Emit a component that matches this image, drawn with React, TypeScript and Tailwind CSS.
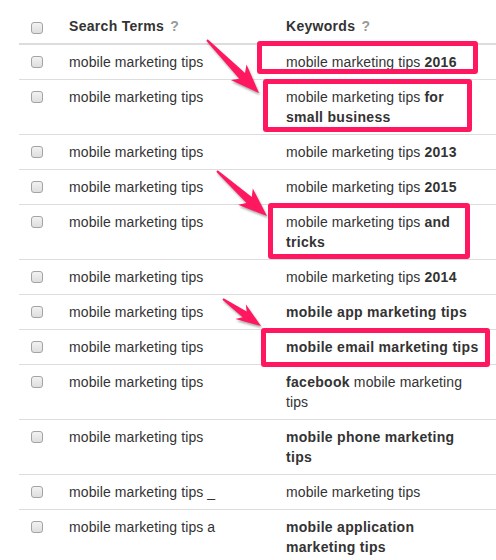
import React from "react";

type Seg = { t: string; b?: boolean };
type Row = { term: string; kw: Seg[] };

const rows: Row[] = [
  { term: "mobile marketing tips", kw: [{ t: "mobile marketing tips " }, { t: "2016", b: true }] },
  { term: "mobile marketing tips", kw: [{ t: "mobile marketing tips " }, { t: "for small business", b: true }] },
  { term: "mobile marketing tips", kw: [{ t: "mobile marketing tips " }, { t: "2013", b: true }] },
  { term: "mobile marketing tips", kw: [{ t: "mobile marketing tips " }, { t: "2015", b: true }] },
  { term: "mobile marketing tips", kw: [{ t: "mobile marketing tips " }, { t: "and tricks", b: true }] },
  { term: "mobile marketing tips", kw: [{ t: "mobile marketing tips " }, { t: "2014", b: true }] },
  { term: "mobile marketing tips", kw: [{ t: "mobile app marketing tips", b: true }] },
  { term: "mobile marketing tips", kw: [{ t: "mobile email marketing tips", b: true }] },
  { term: "mobile marketing tips", kw: [{ t: "facebook", b: true }, { t: " mobile marketing tips" }] },
  { term: "mobile marketing tips", kw: [{ t: "mobile phone marketing tips", b: true }] },
  { term: "mobile marketing tips _", kw: [{ t: "mobile marketing tips" }] },
  { term: "mobile marketing tips a", kw: [{ t: "mobile application marketing tips", b: true }] },
];

function Checkbox({ header }: { header?: boolean }) {
  return (
    <div className={`h-5 flex items-center relative ${header ? "top-[2px]" : ""}`}>
      <span className="block w-[12px] h-[12px] rounded-[3px] border border-[#a3a3a3] bg-gradient-to-b from-[#f2f2f2] to-[#dedede]" />
    </div>
  );
}

type Pt = [number, number];
function arrowPoints(T: Pt, P: Pt, h: number, hw: number, sw: number): string {
  const dx = P[0] - T[0];
  const dy = P[1] - T[1];
  const L = Math.hypot(dx, dy);
  const ux = dx / L;
  const uy = dy / L;
  const nx = -uy;
  const ny = ux;
  const at = (d: number, o: number): Pt => [T[0] + ux * d + nx * o, T[1] + uy * d + ny * o];
  const pts: Pt[] = [
    at(0, 1),
    at(L - h, sw),
    at(L - h - 5, hw),
    P,
    at(L - h - 5, -hw),
    at(L - h, -sw),
    at(0, -1),
  ];
  return pts.map((p) => `${p[0].toFixed(1)},${p[1].toFixed(1)}`).join(" ");
}

export default function App() {
  return (
    <div
      className="relative w-[496px] h-[560px] overflow-hidden bg-white text-[14px] leading-5 text-[#333] tracking-[0.1px]"
      style={{ fontFamily: '"Liberation Sans", Arial, sans-serif' }}
    >
      <div className="pl-[19px]">
        <div className="grid grid-cols-[50px_217px_1fr] border-b-2 border-[#dddddd] pt-4 pb-[7px] font-bold tracking-[0.3px]">
          <div className="pl-3">
            <Checkbox header />
          </div>
          <div>
            Search Terms <span className="text-[#9a9a9a] ml-[2px]">?</span>
          </div>
          <div>
            Keywords <span className="text-[#9a9a9a] ml-[2px]">?</span>
          </div>
        </div>
        {rows.map((r, i) => (
          <div key={i} className="grid grid-cols-[50px_217px_1fr] border-b border-[#dddddd] py-[7px]">
            <div className="pl-3">
              <Checkbox />
            </div>
            <div>{r.term}</div>
            <div className="w-[195px]">
              {r.kw.map((s, j) => (
                <span key={j} className={s.b ? "font-bold tracking-[0.3px]" : ""}>
                  {s.t}
                </span>
              ))}
            </div>
          </div>
        ))}
      </div>

      <div className="absolute left-[257px] top-[41px] w-[221px] h-[33px] border-[5px] border-[#ff1760] rounded-[3px]" />
      <div className="absolute left-[263px] top-[79px] w-[209px] h-[53px] border-[5px] border-[#ff1760] rounded-[3px]" />
      <div className="absolute left-[268px] top-[203px] w-[202px] h-[56px] border-[5px] border-[#ff1760] rounded-[3px]" />
      <div className="absolute left-[261px] top-[328px] w-[229px] h-[39px] border-[5px] border-[#ff1760] rounded-[3px]" />

      <svg
        className="absolute left-0 top-0 drop-shadow-[1px_2px_1px_rgba(0,0,0,0.35)]"
        width="496"
        height="560"
        viewBox="0 0 496 560"
      >
        <polygon points={arrowPoints([207, 40], [259, 93], 24, 11, 4)} fill="#ff1760" />
        <polygon points={arrowPoints([217, 171], [267, 216], 24, 11, 4)} fill="#ff1760" />
        <polygon points={arrowPoints([223, 299], [261, 326], 20, 9, 3.5)} fill="#ff1760" />
      </svg>
    </div>
  );
}
